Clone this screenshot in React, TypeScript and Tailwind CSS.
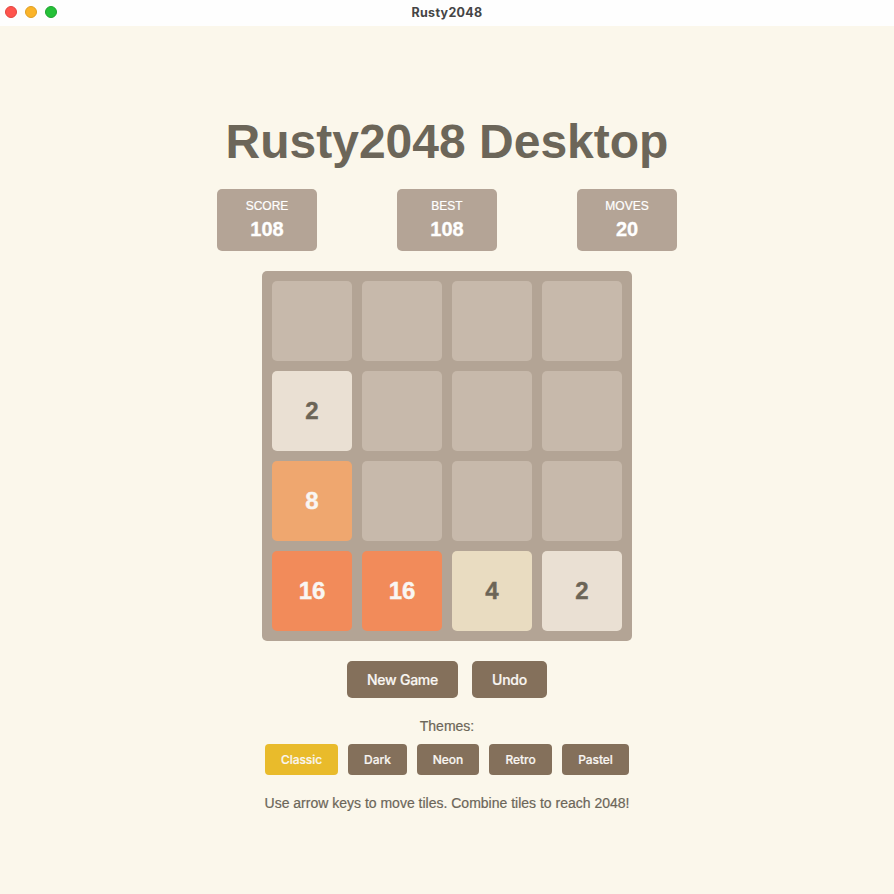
const stats = [
  { label: 'SCORE', value: 108 },
  { label: 'BEST', value: 108 },
  { label: 'MOVES', value: 20 },
];

const board = [0, 0, 0, 0, 2, 0, 0, 0, 8, 0, 0, 0, 16, 16, 4, 2];

const tileStyles: Record<number, string> = {
  0: 'bg-[#c7b9ab]',
  2: 'bg-[#eae0d3] text-[#6c6557]',
  4: 'bg-[#e9dcc1] text-[#6c6557]',
  8: 'bg-[#efa76f] text-[#f9f6f2]',
  16: 'bg-[#f28b5a] text-[#f9f6f2]',
};

const themes = [
  { name: 'Classic', width: 'w-[73px]' },
  { name: 'Dark', width: 'w-[59px]' },
  { name: 'Neon', width: 'w-[62px]' },
  { name: 'Retro', width: 'w-[63px]' },
  { name: 'Pastel', width: 'w-[67px]' },
];

export default function App() {
  return (
    <div className="flex h-[894px] w-[894px] flex-col overflow-hidden bg-[#fbf7eb] font-['Liberation_Sans',Arial,sans-serif] text-[#6c6659]">
      <header className="grid h-[26px] grid-cols-[1fr_auto_1fr] items-center bg-[#fefefe] pb-0.5">
        <div className="flex gap-2 pl-[5px]">
          <span className="size-3 rounded-full border border-[#e2453f] bg-[#ff544d]" />
          <span className="size-3 rounded-full border border-[#dfa023] bg-[#fbb429]" />
          <span className="size-3 rounded-full border border-[#1fa32f] bg-[#25c138]" />
        </div>
        <span className="pt-px font-['Inter',sans-serif] text-[12.5px] leading-4 font-bold tracking-[0.3px] text-[#454545]">Rusty2048</span>
      </header>
      <main className="flex flex-col items-center pt-[88px]">
        <h1 className="h-[56px] text-[48px] leading-[56px] font-bold">Rusty2048 Desktop</h1>
        <div className="mt-[19px] flex gap-20">
          {stats.map((s) => (
            <div key={s.label} className="flex h-[62px] w-[100px] flex-col items-center rounded-[5px] bg-[#b4a496] pt-[10px] text-white">
              <span className="text-[12px] leading-[14px] [-webkit-text-stroke:0.2px]">{s.label}</span>
              <span className="mt-[5px] text-[20px] leading-[23px] font-bold [-webkit-text-stroke:0.3px]">{s.value}</span>
            </div>
          ))}
        </div>
        <div className="mt-5 grid size-[370px] grid-cols-4 gap-[10px] rounded-[5px] bg-[#b3a495] p-[10px]">
          {board.map((n, i) => (
            <div key={i} className={`flex size-20 items-center justify-center rounded-[5px] text-[24px] font-bold [-webkit-text-stroke:0.4px] ${tileStyles[n]}`}>
              {n || ''}
            </div>
          ))}
        </div>
        <div className="mt-5 flex gap-[14px] font-['Inter',sans-serif] text-[14px] font-medium tracking-[-0.25px] text-[#f9f6f2] [-webkit-text-stroke:0.2px]">
          <button className="h-[37px] w-[111px] rounded-[5px] bg-[#84705b]">New Game</button>
          <button className="h-[37px] w-[75px] rounded-[5px] bg-[#84705b]">Undo</button>
        </div>
        <p className="mt-5 text-[14px] leading-4 [-webkit-text-stroke:0.2px]">Themes:</p>
        <div className="mt-[10px] flex gap-[10px] font-['Inter',sans-serif] text-[12px] font-medium tracking-[-0.05px] text-[#f9f6f2] [-webkit-text-stroke:0.2px]">
          {themes.map((t, i) => (
            <button key={t.name} className={`h-[31px] rounded-[4px] ${t.width} ${i === 0 ? 'bg-[#e9bb2b]' : 'bg-[#84705b]'}`}>
              {t.name}
            </button>
          ))}
        </div>
        <p className="mt-5 text-[14px] leading-4 [-webkit-text-stroke:0.2px]">Use arrow keys to move tiles. Combine tiles to reach 2048!</p>
      </main>
    </div>
  );
}
